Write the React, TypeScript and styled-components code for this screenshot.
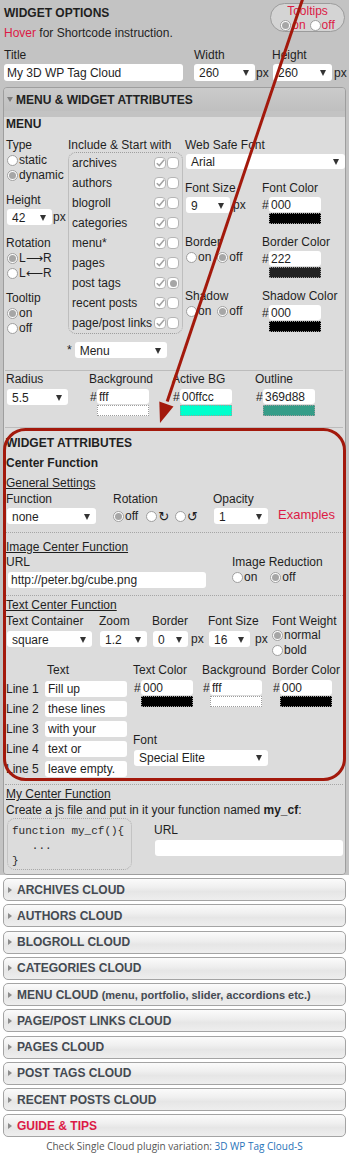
import React from "react";
import styled, { createGlobalStyle, css } from "styled-components";

const CRIMSON = "#dc1a45";
const SANS = `"Liberation Sans", Arial, sans-serif`;

const GlobalStyle = createGlobalStyle`
  html, body { margin: 0; padding: 0; background: #ffffff; }
  body { font-family: ${SANS}; font-size: 12px; color: #1f1f1f; }
  *, *::before, *::after { box-sizing: border-box; }
`;

const Page = styled.div`
  position: relative;
  width: 349px;
  height: 1156px;
  overflow: hidden;
  background: #fff;
`;

const GrayArea = styled.div`
  background: #c3c3c3;
`;

const TopRow = styled.div`
  display: flex;
  justify-content: space-between;
  align-items: flex-start;
  padding: 0 4px;
`;

const TopLeft = styled.div`
  padding-top: 5px;
`;

const WidgetTitle = styled.div`
  font-weight: bold;
  line-height: 16px;
`;

const HoverLine = styled.div`
  margin-top: 4px;
  line-height: 16px;
`;

const Crimson = styled.span`
  color: ${CRIMSON};
`;

const TooltipPill = styled.div`
  margin-top: 3px;
  width: 75px;
  height: 29px;
  border: 1px solid #9b9b9b;
  border-radius: 15px;
  background: #d4d4d4;
  color: ${CRIMSON};
  display: flex;
  flex-direction: column;
  align-items: center;
  padding-top: 1px;
  line-height: 13px;
`;

const PillRadios = styled.div`
  display: flex;
  align-items: center;
  gap: 4px;
`;

const RadioDot = styled.span<{ $on?: boolean }>`
  display: inline-flex;
  align-items: center;
  justify-content: center;
  width: 11px;
  height: 11px;
  flex-shrink: 0;
  margin-right: 1px;
  border-radius: 50%;
  border: 1px solid #9f9f9f;
  background: #fff;
  ${(p) =>
    p.$on &&
    css`
      &::after {
        content: "";
        width: 7px;
        height: 7px;
        border-radius: 50%;
        background: #a6a6a6;
      }
    `}
`;

const RadioItem = styled.span<{ $mr?: number }>`
  display: inline-flex;
  align-items: center;
  line-height: 15px;
  margin-right: ${(p) => p.$mr ?? 0}px;
  white-space: nowrap;
`;

const RadioLine = styled.div<{ $mt?: number; $ml?: number }>`
  display: flex;
  align-items: center;
  margin-top: ${(p) => p.$mt ?? 0}px;
  margin-left: ${(p) => p.$ml ?? 0}px;
`;

const Label = styled.div<{ $mt?: number; $lh?: number; $pl?: number }>`
  line-height: ${(p) => p.$lh ?? 14}px;
  margin-top: ${(p) => p.$mt ?? 0}px;
  padding-left: ${(p) => p.$pl ?? 0}px;
  white-space: nowrap;
`;

const ControlRow = styled.div<{ $mt?: number }>`
  display: flex;
  align-items: center;
  margin-top: ${(p) => p.$mt ?? 0}px;
`;

const Unit = styled.span<{ $ml?: number }>`
  margin-left: ${(p) => p.$ml ?? 1}px;
  line-height: 14px;
`;

const TextInput = styled.input<{ $w: number; $h?: number; $ml?: number }>`
  display: block;
  flex-shrink: 0;
  width: ${(p) => p.$w}px;
  height: ${(p) => p.$h ?? 16}px;
  margin: 0 0 0 ${(p) => p.$ml ?? 0}px;
  padding: 0 3px;
  border: none;
  border-radius: 3px;
  background: #fff;
  font-family: ${SANS};
  font-size: 12px;
  color: #1f1f1f;
  outline: none;
`;

const SelectBox = styled.div<{ $w: number; $h?: number; $ml?: number }>`
  display: flex;
  align-items: center;
  justify-content: space-between;
  flex-shrink: 0;
  width: ${(p) => p.$w}px;
  height: ${(p) => p.$h ?? 16}px;
  margin-left: ${(p) => p.$ml ?? 0}px;
  padding: 1px 6px 0 5px;
  background: #fff;
  border-radius: 3px;
  white-space: nowrap;
  line-height: 14px;
`;

const Caret = styled.span`
  width: 0;
  height: 0;
  border-left: 3.5px solid transparent;
  border-right: 3.5px solid transparent;
  border-top: 6px solid #333;
`;

type SelectProps = { value: string; w: number; h?: number; ml?: number };
const Select = ({ value, w, h, ml }: SelectProps) => (
  <SelectBox $w={w} $h={h} $ml={ml}>
    <span>{value}</span>
    <Caret />
  </SelectBox>
);

const ColorField = styled.div<{ $mt?: number }>`
  display: flex;
  align-items: flex-start;
  margin-top: ${(p) => p.$mt ?? 2}px;
`;

const Hash = styled.span`
  width: 8px;
  padding-left: 1px;
  line-height: 17px;
  flex-shrink: 0;
`;

const ColorStack = styled.div`
  display: flex;
  flex-direction: column;
  gap: 1px;
`;

const ColorText = styled(TextInput)`
  padding-left: 2px;
`;

const Swatch = styled.div<{ $c: string }>`
  width: 52px;
  height: 11px;
  background: ${(p) => p.$c};
  border: 1px dotted #9c9c9c;
`;

type ColorProps = { value: string; color: string; mt?: number };
const Color = ({ value, color, mt }: ColorProps) => (
  <ColorField $mt={mt}>
    <Hash>#</Hash>
    <ColorStack>
      <ColorText $w={52} $h={15} defaultValue={value} />
      <Swatch $c={color} />
    </ColorStack>
  </ColorField>
);

const FieldsRow = styled.div`
  display: flex;
  padding: 7px 0 0 4px;
`;

const FieldCol = styled.div<{ $w: number; $ml?: number }>`
  width: ${(p) => p.$w}px;
  margin-left: ${(p) => p.$ml ?? 0}px;
`;

const Panel = styled.div`
  margin: 6px 3px 0;
  border: 1px solid #9e9e9e;
  border-radius: 4px;
  overflow: hidden;
`;

const PanelHeader = styled.div`
  display: flex;
  align-items: center;
  height: 23px;
  padding-left: 3px;
  background: linear-gradient(#cbcbcb, #bfbfbf);
  font-weight: bold;
  color: #222;
  white-space: nowrap;
`;

const DownCaret = styled.span`
  width: 0;
  height: 0;
  border-left: 3.5px solid transparent;
  border-right: 3.5px solid transparent;
  border-top: 5px solid #7d7d7d;
  margin-right: 3px;
`;

const PanelBody = styled.div`
  background: #dcdcdc;
  padding: 0 1px 4px 2px;
`;

const SectionTitle = styled.div<{ $mt?: number }>`
  font-weight: bold;
  line-height: 14px;
  margin-top: ${(p) => p.$mt ?? 0}px;
  white-space: nowrap;
`;

const SubHeading = styled.div<{ $mt?: number }>`
  line-height: 14px;
  margin-top: ${(p) => p.$mt ?? 0}px;
  text-decoration: underline;
  white-space: nowrap;
`;

const MenuGrid = styled.div`
  display: grid;
  grid-template-columns: 62px 117px 159px;
  align-items: start;
  margin-top: 7px;
`;

const Column = styled.div<{ $ml?: number }>`
  display: flex;
  flex-direction: column;
  align-items: flex-start;
  margin-left: ${(p) => p.$ml ?? 0}px;
`;

const IncludeBox = styled.div`
  width: 115px;
  border: 1px dotted #9f9f9f;
  border-radius: 8px;
  padding: 0 3px;
`;

const IncludeRow = styled.div`
  display: flex;
  align-items: center;
  height: 20px;
  gap: 1px;
`;

const IncludeName = styled.span`
  flex: 1;
  white-space: nowrap;
  line-height: 14px;
`;

const SquareBox = styled.span<{ $dot?: boolean }>`
  display: inline-flex;
  align-items: center;
  justify-content: center;
  width: 12px;
  height: 12px;
  flex-shrink: 0;
  border: 1px solid #b5b5b5;
  border-radius: 4px;
  background: #fff;
  ${(p) =>
    p.$dot &&
    css`
      &::after {
        content: "";
        width: 7px;
        height: 7px;
        border-radius: 50%;
        background: #a6a6a6;
      }
    `}
`;

const CheckMark = () => (
  <svg width="9" height="8" viewBox="0 0 9 8">
    <path d="M0.8 4.2 L3.3 6.6 L8.2 0.8" fill="none" stroke="#a2a2a2" strokeWidth="1.5" />
  </svg>
);

const Star = styled.span`
  margin-left: -1px;
  line-height: 14px;
`;

const PairGrid = styled.div`
  display: grid;
  grid-template-columns: 76px 83px;
  row-gap: 11px;
  margin-top: 12px;
  align-items: start;
`;

const Rule = styled.div<{ $mt: number; $dotted?: boolean }>`
  margin: ${(p) => p.$mt}px 1px 0 -1px;
  border-top: 1px ${(p) => (p.$dotted ? "dotted #a6a6a6" : "solid #bcbcbc")};
`;

const FourGrid = styled.div<{ $cols: string; $mt?: number }>`
  display: grid;
  grid-template-columns: ${(p) => p.$cols};
  align-items: start;
  margin-top: ${(p) => p.$mt ?? 0}px;
`;

const GenGrid = styled.div`
  display: grid;
  grid-template-columns: 107px 100px 65px auto;
  align-items: center;
  row-gap: 2px;
  margin-top: 2px;
`;

const Examples = styled.span`
  color: ${CRIMSON};
  font-size: 13px;
  line-height: 14px;
  margin-top: -3px;
`;

const Glyph = styled.span<{ $size?: number }>`
  font-family: "DejaVu Sans", sans-serif;
  font-size: ${(p) => p.$size ?? 12}px;
`;

const LinesArea = styled.div`
  display: flex;
  margin-top: 5px;
`;

const LinesCol = styled.div`
  width: 127px;
  flex-shrink: 0;
`;

const LineRows = styled.div`
  margin-top: 2px;
`;

const LineRow = styled.div`
  display: flex;
  align-items: center;
  height: 20px;
`;

const LineLabel = styled.span`
  width: 39px;
  white-space: nowrap;
`;

const ColorsGrid = styled.div`
  display: grid;
  grid-template-columns: 69px 70px auto;
  align-items: start;
`;

const FontCell = styled.div`
  grid-column: 1 / -1;
`;

const CodeRow = styled.div`
  display: flex;
  margin-top: 1px;
`;

const CodeBox = styled.pre`
  margin: 0 0 0 1px;
  width: 125px;
  height: 52px;
  border: 1px dotted #a9a9a9;
  border-radius: 8px;
  padding: 5px 4px 0;
  font-family: "Liberation Mono", "DejaVu Sans Mono", monospace;
  font-size: 11px;
  line-height: 15px;
  color: #2a2a2a;
  white-space: pre;
  overflow: hidden;
`;

const AccordionList = styled.div`
  display: flex;
  flex-direction: column;
  gap: 3.25px;
  padding: 3px 3px 0;
`;

const AccordionHeader = styled.div<{ $accent?: boolean }>`
  display: flex;
  align-items: center;
  height: 23px;
  padding-left: 4px;
  border: 1px solid #a4a4a4;
  border-radius: 5px;
  background: linear-gradient(#fbfbfb, #efefef 40%, #e6e6e6 60%, #eeeeee);
  font-weight: bold;
  color: ${(p) => (p.$accent ? CRIMSON : "#444a52")};
  white-space: nowrap;
`;

const RightCaret = styled.span`
  width: 0;
  height: 0;
  border-top: 3px solid transparent;
  border-bottom: 3px solid transparent;
  border-left: 4px solid #8c8c8c;
  margin-right: 5px;
`;

const SmallBold = styled.span`
  font-size: 11px;
`;

const Footer = styled.div`
  padding-top: 2px;
  text-align: center;
  font-family: "Open Sans", sans-serif;
  font-size: 10px;
  line-height: 14px;
  color: #555;
`;

const FooterLink = styled.a`
  color: #1f72b8;
  text-decoration: none;
`;

const Overlay = styled.svg`
  position: absolute;
  left: 0;
  top: 0;
  pointer-events: none;
`;

const includeItems: { name: string; start?: boolean }[] = [
  { name: "archives" },
  { name: "authors" },
  { name: "blogroll" },
  { name: "categories" },
  { name: "menu*" },
  { name: "pages" },
  { name: "post tags", start: true },
  { name: "recent posts" },
  { name: "page/post links" },
];

const accordions = [
  "ARCHIVES CLOUD",
  "AUTHORS CLOUD",
  "BLOGROLL CLOUD",
  "CATEGORIES CLOUD",
  "MENU CLOUD",
  "PAGE/POST LINKS CLOUD",
  "PAGES CLOUD",
  "POST TAGS CLOUD",
  "RECENT POSTS CLOUD",
];

const textLines = ["Fill up", "these lines", "with your", "text or", "leave empty."];

export default function App() {
  return (
    <Page>
      <GlobalStyle />
      <GrayArea>
        <TopRow>
          <TopLeft>
            <WidgetTitle>WIDGET OPTIONS</WidgetTitle>
            <HoverLine>
              <Crimson>Hover</Crimson> for Shortcode instruction.
            </HoverLine>
          </TopLeft>
          <TooltipPill>
            <span>Tooltips</span>
            <PillRadios>
              <RadioItem>
                <RadioDot $on />
                on
              </RadioItem>
              <RadioItem>
                <RadioDot />
                off
              </RadioItem>
            </PillRadios>
          </TooltipPill>
        </TopRow>

        <FieldsRow>
          <FieldCol $w={179}>
            <Label>Title</Label>
            <ControlRow $mt={2}>
              <TextInput $w={179} $h={17} defaultValue="My 3D WP Tag Cloud" />
            </ControlRow>
          </FieldCol>
          <FieldCol $w={78} $ml={11}>
            <Label>Width</Label>
            <ControlRow $mt={2}>
              <Select value="260" w={61} h={17} />
              <Unit $ml={1}>px</Unit>
            </ControlRow>
          </FieldCol>
          <FieldCol $w={75}>
            <Label>Height</Label>
            <ControlRow $mt={2}>
              <Select value="260" w={59} h={17} ml={1} />
              <Unit $ml={2}>px</Unit>
            </ControlRow>
          </FieldCol>
        </FieldsRow>

        <Panel>
          <PanelHeader>
            <DownCaret />
            MENU &amp; WIDGET ATTRIBUTES
          </PanelHeader>
          <PanelBody>
            <SectionTitle $mt={6}>MENU</SectionTitle>
            <MenuGrid>
              <Column>
                <Label $lh={15}>Type</Label>
                <RadioLine $ml={1}>
                  <RadioItem>
                    <RadioDot />
                    static
                  </RadioItem>
                </RadioLine>
                <RadioLine $ml={1}>
                  <RadioItem>
                    <RadioDot $on />
                    dynamic
                  </RadioItem>
                </RadioLine>
                <Label $mt={10}>Height</Label>
                <ControlRow $mt={2}>
                  <Select value="42" w={45} ml={1} />
                  <Unit>px</Unit>
                </ControlRow>
                <Label $mt={11}>Rotation</Label>
                <RadioLine $ml={1} $mt={1}>
                  <RadioItem>
                    <RadioDot $on />
                    L<Glyph>⟶</Glyph>R
                  </RadioItem>
                </RadioLine>
                <RadioLine $ml={1}>
                  <RadioItem>
                    <RadioDot />
                    L<Glyph>⟵</Glyph>R
                  </RadioItem>
                </RadioLine>
                <Label $mt={10}>Tooltip</Label>
                <RadioLine $ml={1} $mt={1}>
                  <RadioItem>
                    <RadioDot $on />
                    on
                  </RadioItem>
                </RadioLine>
                <RadioLine $ml={1}>
                  <RadioItem>
                    <RadioDot />
                    off
                  </RadioItem>
                </RadioLine>
              </Column>

              <Column>
                <Label>Include &amp; Start with</Label>
                <IncludeBox>
                  {includeItems.map((it) => (
                    <IncludeRow key={it.name}>
                      <IncludeName>{it.name}</IncludeName>
                      <SquareBox>
                        <CheckMark />
                      </SquareBox>
                      <SquareBox $dot={it.start} />
                    </IncludeRow>
                  ))}
                </IncludeBox>
                <ControlRow $mt={8}>
                  <Star>*</Star>
                  <Select value="Menu" w={92} ml={3} />
                </ControlRow>
              </Column>

              <Column>
                <Label>Web Safe Font</Label>
                <ControlRow $mt={2}>
                  <Select value="Arial" w={159} h={15} ml={1} />
                </ControlRow>
                <PairGrid>
                  <div>
                    <Label>Font Size</Label>
                    <ControlRow $mt={2}>
                      <Select value="9" w={44} ml={1} />
                      <Unit $ml={3}>px</Unit>
                    </ControlRow>
                  </div>
                  <div>
                    <Label $pl={1}>Font Color</Label>
                    <Color value="000" color="#000" />
                  </div>
                  <div>
                    <Label>Border</Label>
                    <RadioLine $mt={1} $ml={1}>
                      <RadioItem $mr={6}>
                        <RadioDot />
                        on
                      </RadioItem>
                      <RadioItem>
                        <RadioDot $on />
                        off
                      </RadioItem>
                    </RadioLine>
                  </div>
                  <div>
                    <Label $pl={1}>Border Color</Label>
                    <Color value="222" color="#222" />
                  </div>
                  <div>
                    <Label>Shadow</Label>
                    <RadioLine $mt={1} $ml={1}>
                      <RadioItem $mr={6}>
                        <RadioDot />
                        on
                      </RadioItem>
                      <RadioItem>
                        <RadioDot $on />
                        off
                      </RadioItem>
                    </RadioLine>
                  </div>
                  <div>
                    <Label $pl={1}>Shadow Color</Label>
                    <Color value="000" color="#000" />
                  </div>
                </PairGrid>
              </Column>
            </MenuGrid>

            <Rule $mt={12} />

            <FourGrid $cols="83px 83px 83px auto" $mt={1}>
              <div>
                <Label>Radius</Label>
                <ControlRow $mt={3}>
                  <Select value="5.5" w={61} ml={1} />
                </ControlRow>
              </div>
              <div>
                <Label>Background</Label>
                <Color value="fff" color="#fff" mt={3} />
              </div>
              <div>
                <Label>Active BG</Label>
                <Color value="00ffcc" color="#00ffcc" mt={3} />
              </div>
              <div>
                <Label>Outline</Label>
                <Color value="369d88" color="#369d88" mt={3} />
              </div>
            </FourGrid>

            <Rule $mt={11} />

            <SectionTitle $mt={8}>WIDGET ATTRIBUTES</SectionTitle>
            <SectionTitle $mt={6}>Center Function</SectionTitle>
            <SubHeading $mt={6}>General Settings</SubHeading>
            <GenGrid>
              <Label>Function</Label>
              <Label>Rotation</Label>
              <Label>Opacity</Label>
              <span />
              <Select value="none" w={89} ml={1} />
              <RadioLine>
                <RadioItem $mr={8}>
                  <RadioDot $on />
                  off
                </RadioItem>
                <RadioItem $mr={6}>
                  <RadioDot />
                  <Glyph $size={13}>↻</Glyph>
                </RadioItem>
                <RadioItem>
                  <RadioDot />
                  <Glyph $size={13}>↺</Glyph>
                </RadioItem>
              </RadioLine>
              <Select value="1" w={54} ml={1} />
              <Examples>Examples</Examples>
            </GenGrid>

            <Rule $mt={8} $dotted />

            <SubHeading $mt={7}>Image Center Function</SubHeading>
            <FourGrid $cols="226px auto" $mt={1}>
              <div>
                <Label>URL</Label>
                <ControlRow $mt={3}>
                  <TextInput $w={198} $ml={2} defaultValue="http://peter.bg/cube.png" />
                </ControlRow>
              </div>
              <div>
                <Label>Image Reduction</Label>
                <RadioLine $mt={1}>
                  <RadioItem $mr={13}>
                    <RadioDot />
                    on
                  </RadioItem>
                  <RadioItem>
                    <RadioDot $on />
                    off
                  </RadioItem>
                </RadioLine>
              </div>
            </FourGrid>

            <Rule $mt={7} $dotted />

            <SubHeading $mt={2}>Text Center Function</SubHeading>
            <FourGrid $cols="93px 53px 56px 64px auto" $mt={2}>
              <div>
                <Label>Text Container</Label>
                <ControlRow $mt={3}>
                  <Select value="square" w={85} ml={1} />
                </ControlRow>
              </div>
              <div>
                <Label>Zoom</Label>
                <ControlRow $mt={3}>
                  <Select value="1.2" w={47} ml={1} />
                </ControlRow>
              </div>
              <div>
                <Label>Border</Label>
                <ControlRow $mt={3}>
                  <Select value="0" w={35} ml={1} />
                  <Unit $ml={3}>px</Unit>
                </ControlRow>
              </div>
              <div>
                <Label>Font Size</Label>
                <ControlRow $mt={3}>
                  <Select value="16" w={41} ml={1} />
                  <Unit $ml={5}>px</Unit>
                </ControlRow>
              </div>
              <div>
                <Label>Font Weight</Label>
                <RadioLine>
                  <RadioItem>
                    <RadioDot $on />
                    normal
                  </RadioItem>
                </RadioLine>
                <RadioLine>
                  <RadioItem>
                    <RadioDot />
                    bold
                  </RadioItem>
                </RadioLine>
              </div>
            </FourGrid>

            <LinesArea>
              <LinesCol>
                <Label $pl={41}>Text</Label>
                <LineRows>
                  {textLines.map((t, i) => (
                    <LineRow key={t}>
                      <LineLabel>Line {i + 1}</LineLabel>
                      <TextInput $w={82} defaultValue={t} />
                    </LineRow>
                  ))}
                </LineRows>
              </LinesCol>
              <ColorsGrid>
                <div>
                  <Label>Text Color</Label>
                  <Color value="000" color="#000" mt={3} />
                </div>
                <div>
                  <Label>Background</Label>
                  <Color value="fff" color="#fff" mt={3} />
                </div>
                <div>
                  <Label>Border Color</Label>
                  <Color value="000" color="#000" mt={3} />
                </div>
                <FontCell>
                  <Label $mt={12}>Font</Label>
                  <ControlRow $mt={3}>
                    <Select value="Special Elite" w={134} ml={1} />
                  </ControlRow>
                </FontCell>
              </ColorsGrid>
            </LinesArea>

            <Rule $mt={5} $dotted />

            <SubHeading $mt={2}>My Center Function</SubHeading>
            <Label $mt={2}>
              Create a js file and put in it your function named <b>my_cf</b>:
            </Label>
            <CodeRow>
              <CodeBox>{"function my_cf(){\n   ...\n}"}</CodeBox>
              <Column $ml={22}>
                <Label $mt={5}>URL</Label>
                <ControlRow $mt={3}>
                  <TextInput $w={188} $ml={1} defaultValue="" />
                </ControlRow>
              </Column>
            </CodeRow>
          </PanelBody>
        </Panel>
      </GrayArea>

      <AccordionList>
        {accordions.map((a) => (
          <AccordionHeader key={a}>
            <RightCaret />
            {a === "MENU CLOUD" ? (
              <>
                MENU CLOUD&nbsp;<SmallBold>(menu, portfolio, slider, accordions etc.)</SmallBold>
              </>
            ) : (
              a
            )}
          </AccordionHeader>
        ))}
        <AccordionHeader $accent>
          <RightCaret />
          GUIDE &amp; TIPS
        </AccordionHeader>
      </AccordionList>

      <Footer>
        Check Single Cloud plugin variation: <FooterLink href="#">3D WP Tag Cloud-S</FooterLink>
      </Footer>

      <Overlay width="349" height="1156" viewBox="0 0 349 1156">
        <line x1="304" y1="-5" x2="167.2" y2="401.6" stroke="#a3190c" strokeWidth="3" />
        <polygon points="160,423 173.5,406.4 159.3,401.6" fill="#a3190c" />
        <rect x="4.5" y="429.5" width="340" height="350" rx="21" ry="21" fill="none" stroke="#a3190c" strokeWidth="3" />
      </Overlay>
    </Page>
  );
}
